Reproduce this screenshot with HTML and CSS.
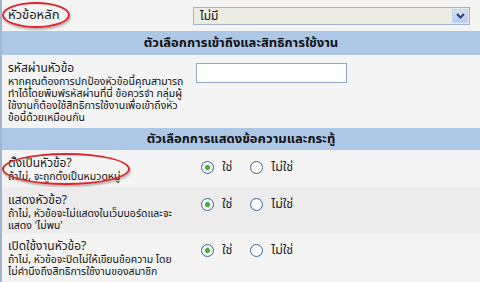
FILE: index.html
```html
<!DOCTYPE html>
<html lang="th">
  <head>
    <meta charset="UTF-8" />
    <title>ตัวเลือกหัวข้อ</title>
    <link rel="stylesheet" href="styles.css">
  </head>
  <body>
    <div class="panel">
      <div class="row row-first">
        <div class="label">
          <span class="title title-main">หัวข้อหลัก</span>
        </div>
        <div class="field">
          <div class="select">
            <span class="select-value">ไม่มี</span>
            <span class="select-arrow">
              <svg width="9" height="6" viewBox="0 0 9 6"><path d="M1 1 L4.5 4.5 L8 1" fill="none" stroke="#2c3f6e" stroke-width="2"/></svg>
            </span>
          </div>
        </div>
        <div class="mark mark-parent"></div>
      </div>

      <div class="section">ตัวเลือกการเข้าถึงและสิทธิการใช้งาน</div>

      <div class="row row-pass">
        <div class="label">
          <span class="title">รหัสผ่านหัวข้อ</span>
          <span class="desc">หากคุณต้องการปกป้องหัวข้อนี้คุณสามารถ<br>ทำได้โดยพิมพ์รหัสผ่านที่นี่ ข้อควรจำ กลุ่มผู้<br>ใช้งานก็ต้องใช้สิทธิการใช้งานเพื่อเข้าถึงหัว<br>ข้อนี้ด้วยเหมือนกัน</span>
        </div>
        <div class="field">
          <input type="text" class="text-input" />
        </div>
      </div>

      <div class="section section-second">ตัวเลือกการแสดงข้อความและกระทู้</div>

      <div class="row row-cat">
        <div class="label">
          <span class="title">ตั้งเป็นหัวข้อ?</span>
          <span class="desc">ถ้าไม่, จะถูกตั้งเป็นหมวดหมู่</span>
        </div>
        <div class="field choices">
          <label class="choice"><span class="radio checked"></span>ใช่</label>
          <label class="choice"><span class="radio"></span>ไม่ใช่</label>
        </div>
        <div class="mark mark-cat"></div>
      </div>

      <div class="row row-alt row-show">
        <div class="label">
          <span class="title">แสดงหัวข้อ?</span>
          <span class="desc">ถ้าไม่, หัวข้อจะไม่แสดงในเว็บบอร์ดและจะ<br>แสดง 'ไม่พบ'</span>
        </div>
        <div class="field choices">
          <label class="choice"><span class="radio checked"></span>ใช่</label>
          <label class="choice"><span class="radio"></span>ไม่ใช่</label>
        </div>
      </div>

      <div class="row row-open">
        <div class="label">
          <span class="title">เปิดใช้งานหัวข้อ?</span>
          <span class="desc">ถ้าไม่, หัวข้อจะปิดไม่ให้เขียนข้อความ โดย<br>ไม่คำนึงถึงสิทธิการใช้งานของสมาชิก</span>
        </div>
        <div class="field choices">
          <label class="choice"><span class="radio checked"></span>ใช่</label>
          <label class="choice"><span class="radio"></span>ไม่ใช่</label>
        </div>
      </div>
    </div>
  </body>
</html>
```

FILE: styles.css
```css
* {
  margin: 0;
  padding: 0;
  box-sizing: border-box;
}

body {
  font-family: Tahoma, "Noto Sans Thai", "Noto Sans", sans-serif;
  background: #f4f4f4;
  color: #111;
  width: 480px;
  height: 282px;
  overflow: hidden;
}

.panel {
  border-left: 2px solid #a3b6cf;
  min-height: 282px;
}

.row {
  position: relative;
  display: flex;
  background: #f4f4f4;
  padding-top: 6px;
}

.row-alt {
  background: #ececec;
}

.row-first {
  height: 31px;
  padding-top: 0;
  align-items: center;
}

.row-pass {
  height: 73px;
}

.row-cat {
  height: 37px;
}

.row-show {
  height: 46px;
}

.row-open {
  height: 49px;
}

.label {
  width: 191px;
  padding-left: 6px;
  display: flex;
  flex-direction: column;
}

.title {
  font-size: 12px;
  line-height: 15px;
  color: #1a1a1a;
}

.title-main {
  font-size: 13px;
}

.desc {
  font-size: 10.5px;
  line-height: 12px;
  white-space: nowrap;
}

.field {
  flex: 1;
  padding-right: 10px;
}

.select {
  display: flex;
  align-items: center;
  height: 18px;
  margin-top: 1px;
  border: 1px solid #a0b4cd;
  background: #edece2;
  padding: 1px;
}

.select-value {
  flex: 1;
  font-size: 12px;
  padding-left: 5px;
}

.select-arrow {
  width: 16px;
  height: 14px;
  display: flex;
  align-items: center;
  justify-content: center;
  background: linear-gradient(#d6e1fa, #b7c9f2);
  border: 1px solid #c3d3f5;
}

.text-input {
  display: block;
  width: 151px;
  height: 20px;
  margin-top: 2px;
  margin-left: 3px;
  border: 1px solid #8fa7c4;
  background: #fff;
}

.section {
  background: #adc8e6;
  font-size: 13px;
  font-weight: bold;
  text-align: center;
  height: 24px;
  line-height: 24px;
}

.section-second {
  height: 22px;
  line-height: 22px;
}

.choices {
  display: flex;
  gap: 18px;
  padding-left: 8px;
  padding-top: 4px;
}

.choice {
  display: flex;
  align-items: center;
  gap: 8px;
  font-size: 12.5px;
  height: 14px;
  color: #1a1a2a;
}

.radio {
  width: 13px;
  height: 13px;
  border-radius: 50%;
  border: 1px solid #3e6a9c;
  background: radial-gradient(circle, #fff 50%, #e4e4dc 100%);
}

.radio.checked {
  background: radial-gradient(circle, #3fc23f 0, #2ea82e 2px, #fff 3px, #fff 50%, #e4e4dc 100%);
}

.mark {
  position: absolute;
  border: 2px solid #e0232b;
  border-radius: 50%;
  box-shadow: 1px 2px 2px rgba(0, 0, 0, 0.25);
}

.mark-parent {
  left: 0;
  top: 2px;
  width: 68px;
  height: 26px;
}

.mark-cat {
  left: 0;
  top: 3px;
  width: 128px;
  height: 32px;
}
```
